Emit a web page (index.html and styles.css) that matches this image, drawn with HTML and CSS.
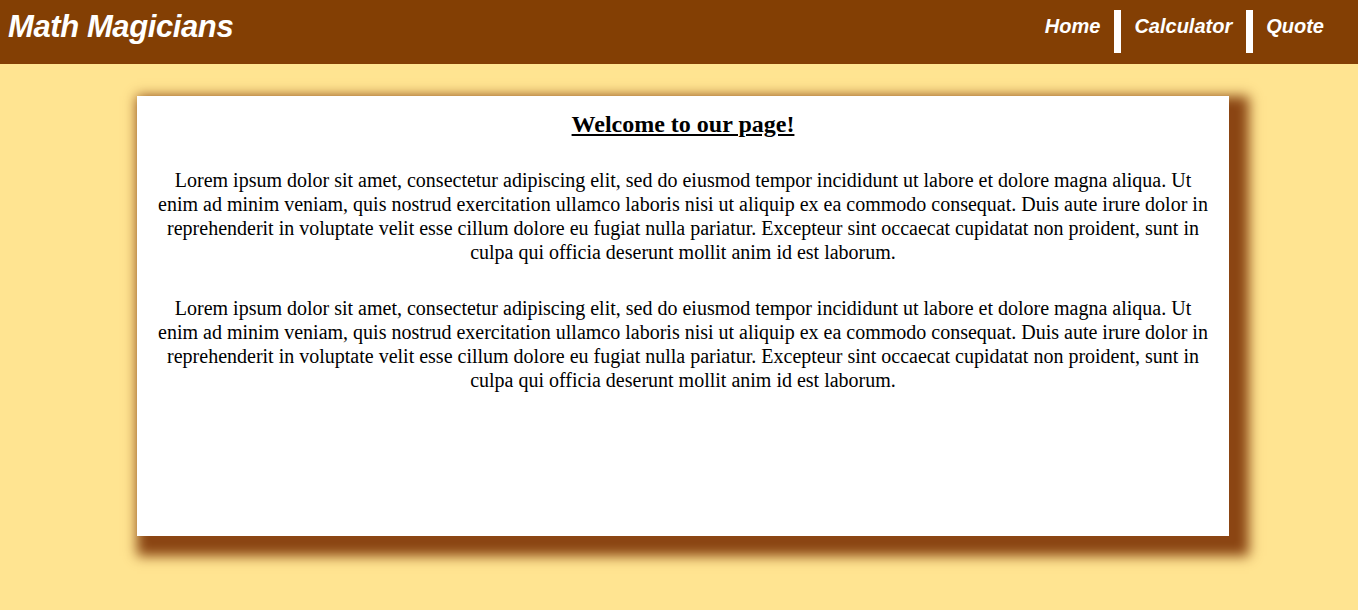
FILE: index.html
```html
<!DOCTYPE html>
<html>
<head>
<meta charset="utf-8">
<link rel="stylesheet" href="styles.css">
</head>
<body>
<header class="topbar">
  <h1 class="logo">Math Magicians</h1>
  <nav class="nav">
    <a class="nav-link" href="#">Home</a>
    <span class="sep"></span>
    <a class="nav-link" href="#">Calculator</a>
    <span class="sep"></span>
    <a class="nav-link" href="#">Quote</a>
  </nav>
</header>
<main class="main">
  <section class="card">
    <h2 class="title">Welcome to our page!</h2>
    <p class="text">Lorem ipsum dolor sit amet, consectetur adipiscing elit, sed do eiusmod tempor incididunt ut labore et dolore magna aliqua. Ut enim ad minim veniam, quis nostrud exercitation ullamco laboris nisi ut aliquip ex ea commodo consequat. Duis aute irure dolor in reprehenderit in voluptate velit esse cillum dolore eu fugiat nulla pariatur. Excepteur sint occaecat cupidatat non proident, sunt in culpa qui officia deserunt mollit anim id est laborum.</p>
    <p class="text">Lorem ipsum dolor sit amet, consectetur adipiscing elit, sed do eiusmod tempor incididunt ut labore et dolore magna aliqua. Ut enim ad minim veniam, quis nostrud exercitation ullamco laboris nisi ut aliquip ex ea commodo consequat. Duis aute irure dolor in reprehenderit in voluptate velit esse cillum dolore eu fugiat nulla pariatur. Excepteur sint occaecat cupidatat non proident, sunt in culpa qui officia deserunt mollit anim id est laborum.</p>
  </section>
</main>
</body>
</html>
```
FILE: styles.css
```css
html, body {
  margin: 0;
  padding: 0;
}
body {
  background: #ffe491;
  font-family: "Liberation Serif", "Times New Roman", serif;
  min-height: 610px;
}
.topbar {
  background: #833f04;
  height: 64px;
  display: flex;
  align-items: flex-start;
  justify-content: space-between;
  padding: 0 20px 0 8px;
}
.logo {
  margin: 8px 0 0;
  font-family: "Liberation Sans", Arial, sans-serif;
  font-style: italic;
  font-weight: bold;
  font-size: 31px;
  line-height: 38px;
  color: #fff;
  letter-spacing: -0.4px;
}
.nav {
  display: flex;
  align-items: flex-start;
  padding-top: 10px;
}
.nav-link {
  font-family: "Liberation Sans", Arial, sans-serif;
  font-style: italic;
  font-weight: bold;
  font-size: 20px;
  line-height: 32px;
  color: #fff;
  text-decoration: none;
  padding: 0 14px 0 13px;
}
.sep {
  width: 7px;
  height: 43px;
  background: #fff;
}
.main {
  padding: 32px 129px 0 137px;
}
.card {
  background: #fff;
  height: 440px;
  box-sizing: border-box;
  padding: 1px 20px;
  box-shadow: 10px 10px 12px 10px #8b4513;
  text-align: center;
  color: #000;
}
.title {
  font-size: 24px;
  margin: 14px 0 0;
  text-decoration: underline;
}
.text {
  font-size: 20px;
  line-height: 24px;
  margin: 30px 0 0;
}
.text + .text {
  margin-top: 32px;
}
```
